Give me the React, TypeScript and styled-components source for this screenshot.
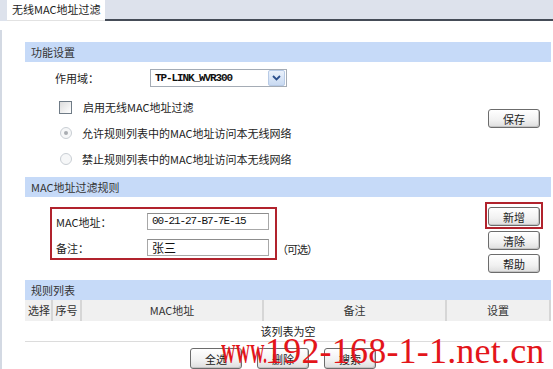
import React from "react";
import styled, { createGlobalStyle } from "styled-components";

const GlobalStyle = createGlobalStyle`
  html, body {
    margin: 0;
    padding: 0;
    background: #ffffff;
  }
  body {
    font-family: "Noto Sans CJK SC", "DejaVu Sans", sans-serif;
    font-size: 11px;
    color: #222;
  }
`;

const Frame = styled.div`
  width: 553px;
  height: 369px;
  position: relative;
  overflow: hidden;
  background: #fff;
`;

const TabBar = styled.div`
  height: 21px;
  display: flex;
  align-items: stretch;
  background: #dde2ec;
`;

const Tab = styled.div`
  margin-left: 7px;
  width: 98px;
  background: #fff;
  box-sizing: border-box;
  padding-left: 5px;
  line-height: 19px;
  border-bottom: 1px solid #e2e2e2;
  font-size: 11px;
  color: #222;
  white-space: nowrap;
`;

const TabRest = styled.div`
  flex: 1;
  border-bottom: 2px solid #454c57;
`;

const Body = styled.div`
  margin-top: 9px;
  border-left: 2px solid #d3d9e3;
  padding: 12px 2px 0 23px;
  display: flex;
  flex-direction: column;
`;

const SectionHeader = styled.div`
  height: 20px;
  line-height: 20px;
  background: #c6daf8;
  padding-left: 6px;
  color: #333;
`;

const SettingsArea = styled.div`
  display: flex;
  padding: 3px 0 5px;
`;

const OptionList = styled.div`
  flex: 1;
  display: flex;
  flex-direction: column;
`;

const OptionRow = styled.div<{ $indent: number; $top?: number }>`
  height: 26px;
  display: flex;
  align-items: center;
  padding-left: ${(p) => p.$indent}px;
  margin-top: ${(p) => p.$top ?? 0}px;
  white-space: nowrap;
`;

const FieldLabel = styled.span`
  width: 95px;
`;

const Select = styled.div`
  width: 137px;
  height: 18px;
  box-sizing: border-box;
  border: 1px solid #a5acb5;
  display: flex;
  align-items: center;
  justify-content: space-between;
  padding-left: 4px;
  font-family: "Liberation Mono", monospace;
  font-size: 11px;
  font-weight: bold;
  letter-spacing: -1.1px;
  color: #111;
`;

const SelectArrow = styled.div`
  width: 15px;
  height: 14px;
  margin-right: 1px;
  border: 1px solid #b8cbe6;
  border-radius: 2px;
  background: linear-gradient(#eaf1fb, #c9daf2);
  display: flex;
  align-items: center;
  justify-content: center;
`;

const CheckBox = styled.span`
  width: 11px;
  height: 11px;
  border: 1px solid #6f7b86;
  background: linear-gradient(135deg, #dcdcdc, #fff);
  margin-right: 11px;
`;

const Radio = styled.span<{ $checked?: boolean }>`
  width: 10px;
  height: 10px;
  border-radius: 50%;
  border: 1px solid #c9ced4;
  background: #f6f7f8;
  margin-right: 10px;
  display: flex;
  align-items: center;
  justify-content: center;
  &::after {
    content: "";
    width: 4px;
    height: 4px;
    border-radius: 50%;
    background: ${(p) => (p.$checked ? "#a9adb2" : "transparent")};
  }
`;

const SideButtons = styled.div<{ $top: number }>`
  display: flex;
  flex-direction: column;
  align-items: center;
  gap: 4px;
  padding-top: ${(p) => p.$top}px;
  padding-right: 8px;
  width: 58px;
`;

const Button = styled.button`
  width: 52px;
  height: 19px;
  padding: 0;
  border: 1px solid #6c6c6c;
  border-radius: 3px;
  background: linear-gradient(#ffffff, #f1f1f1 60%, #dedede);
  box-shadow: inset -1px -1px 0 #c4c4c4;
  font-family: "Noto Sans CJK SC", sans-serif;
  font-size: 11px;
  line-height: 16px;
  color: #222;
`;

const HighlightBox = styled.div`
  border: 2px solid #b1232d;
  padding: 3px 1px 1px;
  margin-bottom: -2px;
`;

const RuleArea = styled.div`
  display: flex;
  justify-content: space-between;
  padding-top: 5px;
  padding-bottom: 7px;
`;

const RuleLeft = styled.div`
  display: flex;
  align-items: flex-end;
  padding-left: 25px;
  padding-top: 5px;
  align-self: flex-start;
`;

const InputBox = styled.div`
  border: 2px solid #b1232d;
  padding: 4px 2px 2px 2px;
  display: flex;
  flex-direction: column;
  gap: 9px;
  width: 219px;
`;

const InputRow = styled.div`
  display: flex;
  align-items: center;
  height: 17px;
`;

const InputLabel = styled.span`
  width: 93px;
  padding-left: 2px;
  box-sizing: border-box;
`;

const TextInput = styled.div<{ $mono?: boolean }>`
  width: 122px;
  height: 17px;
  box-sizing: border-box;
  border: 1px solid #a8a8a8;
  border-top-color: #8d8d8d;
  padding-left: 4px;
  line-height: 15px;
  font-family: ${(p) =>
    p.$mono ? `"Liberation Mono", monospace` : `"Noto Sans CJK SC", sans-serif`};
  font-size: ${(p) => (p.$mono ? "11px" : "12px")};
  letter-spacing: ${(p) => (p.$mono ? "-1.1px" : "0")};
  color: #111;
`;

const OptionalNote = styled.span`
  margin-bottom: 3px;
  white-space: nowrap;
  letter-spacing: -1px;
`;

const Table = styled.div`
  display: grid;
  grid-template-columns: 28px 29px 182px 183px 1fr;
`;

const HeadCell = styled.div<{ $align?: string }>`
  height: 21px;
  line-height: 21px;
  background: #f0f0f0;
  text-align: ${(p) => p.$align ?? "center"};
  padding-left: ${(p) => (p.$align === "left" ? "3px" : "0")};
  border-right: 2px solid #d6d6d6;
  color: #333;
  &:last-child {
    border-right: none;
  }
`;

const EmptyRow = styled.div`
  grid-column: 1 / -1;
  height: 20px;
  line-height: 20px;
  text-align: center;
  border-bottom: 1px solid #dcdcdc;
  color: #222;
`;

const BottomBar = styled.div`
  display: flex;
  justify-content: center;
  gap: 15px;
  margin-top: 6px;
  padding-right: 10px;
  & > button {
    height: 21px;
  }
`;

const Watermark = styled.div`
  position: absolute;
  left: 221px;
  top: 333px;
  height: 37px;
  display: flex;
  align-items: baseline;
  color: #e3151a;
  font-family: "Liberation Serif", serif;
  line-height: 37px;
  pointer-events: none;
  white-space: nowrap;
`;

const WatermarkWww = styled.span`
  display: inline-block;
  font-size: 28px;
  font-weight: bold;
  width: 44px;
  transform: scaleX(0.52);
  transform-origin: left bottom;
`;

const WatermarkHost = styled.span`
  font-size: 36px;
  letter-spacing: 0.2px;
`;

const ChevronDown = () => (
  <svg width="9" height="6" viewBox="0 0 9 6">
    <path d="M1 1 L4.5 4.5 L8 1" fill="none" stroke="#2b4f8c" strokeWidth="1.8" />
  </svg>
);

const App = () => {
  return (
    <Frame>
      <GlobalStyle />
      <TabBar>
        <Tab>无线MAC地址过滤</Tab>
        <TabRest />
      </TabBar>
      <Body>
        <SectionHeader>功能设置</SectionHeader>
        <SettingsArea>
          <OptionList>
            <OptionRow $indent={30}>
              <FieldLabel>作用域：</FieldLabel>
              <Select>
                TP-LINK_WVR300
                <SelectArrow>
                  <ChevronDown />
                </SelectArrow>
              </Select>
            </OptionRow>
            <OptionRow $indent={34} $top={3}>
              <CheckBox />
              启用无线MAC地址过滤
            </OptionRow>
            <OptionRow $indent={35}>
              <Radio $checked />
              允许规则列表中的MAC地址访问本无线网络
            </OptionRow>
            <OptionRow $indent={35}>
              <Radio />
              禁止规则列表中的MAC地址访问本无线网络
            </OptionRow>
          </OptionList>
          <SideButtons $top={44}>
            <Button>保存</Button>
          </SideButtons>
        </SettingsArea>

        <SectionHeader>MAC地址过滤规则</SectionHeader>
        <RuleArea>
          <RuleLeft>
            <InputBox>
              <InputRow>
                <InputLabel>MAC地址：</InputLabel>
                <TextInput $mono>00-21-27-B7-7E-15</TextInput>
              </InputRow>
              <InputRow>
                <InputLabel>备注：</InputLabel>
                <TextInput>张三</TextInput>
              </InputRow>
            </InputBox>
            <OptionalNote>（可选）</OptionalNote>
          </RuleLeft>
          <SideButtons $top={0}>
            <HighlightBox>
              <Button>新增</Button>
            </HighlightBox>
            <Button>清除</Button>
            <Button>帮助</Button>
          </SideButtons>
        </RuleArea>

        <SectionHeader>规则列表</SectionHeader>
        <Table>
          <HeadCell $align="left">选择</HeadCell>
          <HeadCell>序号</HeadCell>
          <HeadCell>MAC地址</HeadCell>
          <HeadCell>备注</HeadCell>
          <HeadCell>设置</HeadCell>
          <EmptyRow>该列表为空</EmptyRow>
        </Table>
        <BottomBar>
          <Button>全选</Button>
          <Button>删除</Button>
          <Button>搜索</Button>
        </BottomBar>
      </Body>
      <Watermark>
        <WatermarkWww>WWW.</WatermarkWww>
        <WatermarkHost>192-168-1-1.net.cn</WatermarkHost>
      </Watermark>
    </Frame>
  );
};

export default App;
